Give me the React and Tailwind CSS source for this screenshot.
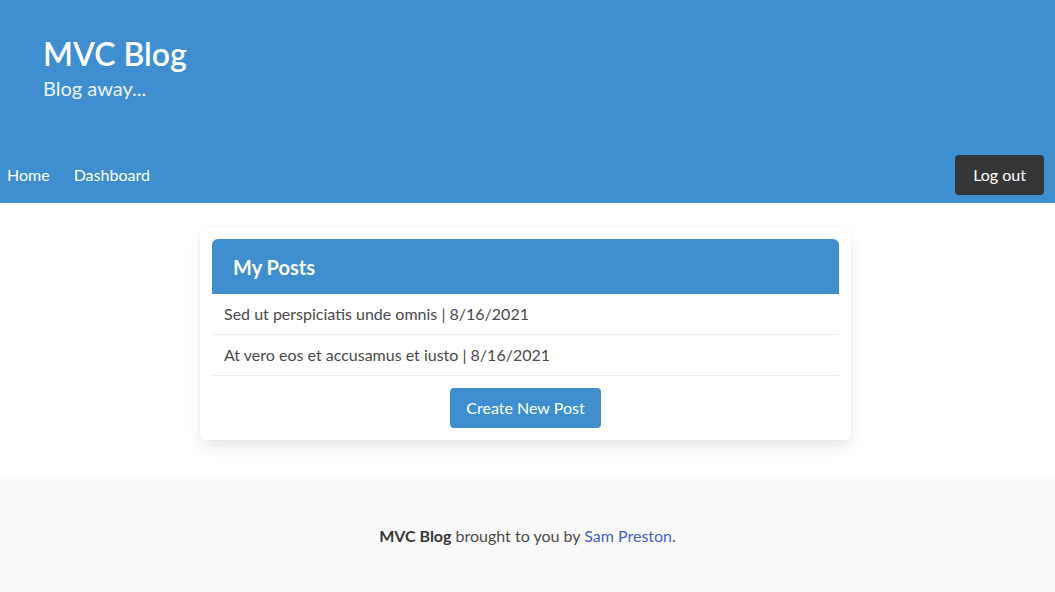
export default function App() {
  const posts = [
    { title: 'Sed ut perspiciatis unde omnis', date: '8/16/2021' },
    { title: 'At vero eos et accusamus et iusto', date: '8/16/2021' },
  ];

  return (
    <div className="min-h-screen bg-white text-[#4a4a4a] font-['Lato',sans-serif] text-base">
      {/* Hero */}
      <header className="bg-[#3e8ed0] text-white">
        <div className="h-[151px] pt-[36px] pl-[43px]">
          <h1 className="text-[32px] font-semibold leading-[36px]">MVC Blog</h1>
          <p className="mt-[4px] text-[20px] leading-[25px] text-white/90">Blog away...</p>
        </div>
        <nav className="h-[52px] flex items-start justify-between pt-1 pl-[7px] pr-[11px]">
          <div className="h-10 flex items-center gap-6">
            <a className="leading-6">Home</a>
            <a className="leading-6">Dashboard</a>
          </div>
          <button className="h-10 px-[18px] rounded bg-[#363636] text-white">Log out</button>
        </nav>
      </header>

      {/* Main */}
      <main className="pt-6 pb-9 pl-[200px]">
        <div className="w-[651px] p-3 bg-white rounded-md shadow-[0_0.5em_1em_-0.125em_rgba(10,10,10,0.1),0_0_0_1px_rgba(10,10,10,0.02)]">
          <div className="h-[55px] flex items-center px-[21px] bg-[#3e8ed0] rounded-t-md">
            <h2 className="text-[20px] font-bold text-white">My Posts</h2>
          </div>
          <ul>
            {posts.map((post, i) => (
              <li key={i} className="h-[41px] flex items-center px-3 border-b border-[#ededed]">
                {post.title} | {post.date}
              </li>
            ))}
          </ul>
          <div className="flex justify-center mt-3">
            <button className="h-10 w-[151px] rounded bg-[#3e8ed0] text-white">Create New Post</button>
          </div>
        </div>
      </main>

      {/* Footer */}
      <footer className="bg-[#fafafa] pt-12 pb-24 text-center leading-6">
        <p>
          <strong className="font-bold text-[#363636]">MVC Blog</strong> brought to you by{' '}
          <a className="text-[#485fc7]">Sam Preston</a>.
        </p>
      </footer>
    </div>
  );
}
